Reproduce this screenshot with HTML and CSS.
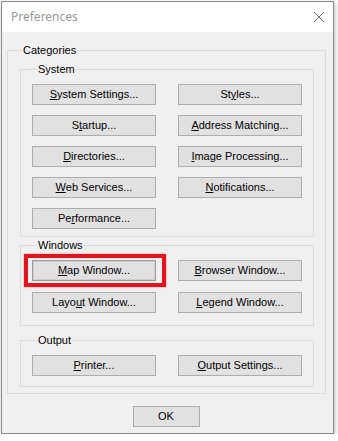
FILE: index.html
```html
<!DOCTYPE html>
<html>
<head>
<meta charset="utf-8">
<link rel="stylesheet" href="styles.css">
</head>
<body>
<div class="window">
  <div class="titlebar">
    <span class="title">Preferences</span>
    <svg class="close" width="12" height="12" viewBox="0 0 12 12"><path d="M1 1 L11 11 M11 1 L1 11" stroke="#6e6e6e" stroke-width="1"/></svg>
  </div>
  <div class="content">
    <div class="group categories">
      <div class="label">Categories</div>
      <div class="group sub system">
        <div class="label">System</div>
        <div class="grid">
          <button class="btn"><u>S</u>ystem Settings...</button>
          <button class="btn">St<u>y</u>les...</button>
          <button class="btn">S<u>t</u>artup...</button>
          <button class="btn"><u>A</u>ddress Matching...</button>
          <button class="btn"><u>D</u>irectories...</button>
          <button class="btn"><u>I</u>mage Processing...</button>
          <button class="btn"><u>W</u>eb Services...</button>
          <button class="btn"><u>N</u>otifications...</button>
          <button class="btn">Pe<u>r</u>formance...</button>
        </div>
      </div>
      <div class="group sub windows">
        <div class="label">Windows</div>
        <div class="grid grid-windows">
          <div class="cell">
            <button class="btn focused"><u>M</u>ap Window...</button>
            <span class="annot"></span>
          </div>
          <button class="btn"><u>B</u>rowser Window...</button>
          <button class="btn">Layo<u>u</u>t Window...</button>
          <button class="btn"><u>L</u>egend Window...</button>
        </div>
      </div>
      <div class="group sub output">
        <div class="label">Output</div>
        <div class="grid">
          <button class="btn"><u>P</u>rinter...</button>
          <button class="btn"><u>O</u>utput Settings...</button>
        </div>
      </div>
    </div>
    <div class="footer">
      <button class="btn ok">OK</button>
    </div>
  </div>
</div>
</body>
</html>
```

FILE: styles.css
```css
html, body {
  margin: 0;
  padding: 0;
  background: #ffffff;
}
body {
  font-family: "Liberation Sans", Arial, sans-serif;
  font-size: 11px;
  color: #000;
}
.window {
  margin: 1px 0 0 1px;
  width: 333px;
  height: 433px;
  box-sizing: border-box;
  border: 1px solid #8a8a8a;
  background: #f0f0f0;
  display: flex;
  flex-direction: column;
  box-shadow: 1px 2px 5px rgba(0, 0, 0, 0.28);
}
.titlebar {
  height: 30px;
  flex: none;
  background: #ffffff;
  display: flex;
  align-items: center;
  justify-content: space-between;
  padding: 0 8px 0 9px;
}
.title {
  font-family: "Noto Sans", "Open Sans", sans-serif;
  font-size: 12px;
  color: #999999;
  line-height: 16px;
}
.close {
  display: block;
}
.content {
  flex: 1;
  display: flex;
  flex-direction: column;
  padding: 0 7px 0 5px;
}
.group {
  border: 1px solid #dcdcdc;
}
.label {
  width: fit-content;
  height: 13px;
  line-height: 13px;
  margin-top: -7px;
  margin-left: 2px;
  padding: 0 1px;
  background: #f0f0f0;
}
.categories {
  margin-top: 18px;
  padding: 0 11px 6px 12px;
}
.sub {
  padding: 0 10px 0 11px;
}
.sub .label {
  margin-left: 5px;
}
.system {
  margin-top: 12px;
  padding-bottom: 7px;
}
.windows {
  margin-top: 8px;
  padding-bottom: 12px;
}
.output {
  margin-top: 14px;
  padding-bottom: 10px;
}
.grid {
  margin-top: 8px;
  display: grid;
  grid-template-columns: 124px 124px;
  column-gap: 22px;
  row-gap: 10px;
}
.grid-windows {
  row-gap: 11px;
}
.cell {
  position: relative;
  display: flex;
}
.btn {
  display: block;
  width: 124px;
  height: 21px;
  box-sizing: border-box;
  margin: 0;
  padding: 0;
  border: 1px solid #adadad;
  background: #e1e1e1;
  font-family: "Liberation Sans", Arial, sans-serif;
  font-size: 11px;
  color: #000;
  text-align: center;
  line-height: 19px;
}
.btn u {
  text-decoration: underline;
  text-underline-offset: 1px;
}
.btn.focused {
  border-color: #9a9a9a;
  box-shadow: inset 0 0 0 1px #cfcfcf;
}
.annot {
  position: absolute;
  top: -6px;
  left: -8px;
  right: -10px;
  bottom: -6px;
  border: 4px solid #e3141c;
  box-shadow: 0 0 2px rgba(227, 20, 28, 0.4);
  pointer-events: none;
}
.footer {
  display: flex;
  justify-content: center;
  margin-top: 12px;
  padding-right: 1px;
}
.ok {
  width: 67px;
}
```
